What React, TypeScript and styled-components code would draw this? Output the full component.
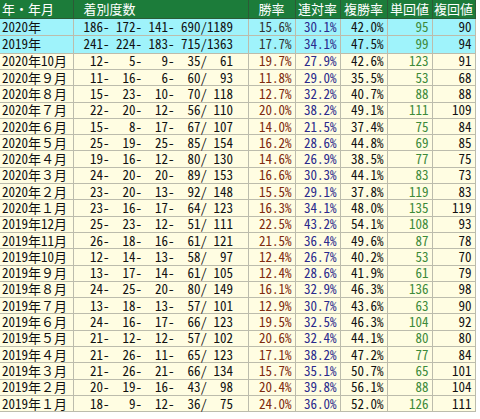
import React from "react";
import styled, { createGlobalStyle } from "styled-components";

const Global = createGlobalStyle`
  html, body { margin: 0; padding: 0; background: #ffffff; }
  body { width: 480px; height: 419px; overflow: hidden; }
`;

type Row = {
  label: string;
  counts: [number, number, number, number, number];
  win: string;
  ren: string;
  fuku: string;
  tan: number;
  fkv: number;
  summary?: boolean;
};

const rows: Row[] = [
  { label: "2020年", counts: [186, 172, 141, 690, 1189], win: "15.6%", ren: "30.1%", fuku: "42.0%", tan: 95, fkv: 90, summary: true },
  { label: "2019年", counts: [241, 224, 183, 715, 1363], win: "17.7%", ren: "34.1%", fuku: "47.5%", tan: 99, fkv: 94, summary: true },
  { label: "2020年10月", counts: [12, 5, 9, 35, 61], win: "19.7%", ren: "27.9%", fuku: "42.6%", tan: 123, fkv: 91 },
  { label: "2020年９月", counts: [11, 16, 6, 60, 93], win: "11.8%", ren: "29.0%", fuku: "35.5%", tan: 53, fkv: 68 },
  { label: "2020年８月", counts: [15, 23, 10, 70, 118], win: "12.7%", ren: "32.2%", fuku: "40.7%", tan: 88, fkv: 88 },
  { label: "2020年７月", counts: [22, 20, 12, 56, 110], win: "20.0%", ren: "38.2%", fuku: "49.1%", tan: 111, fkv: 109 },
  { label: "2020年６月", counts: [15, 8, 17, 67, 107], win: "14.0%", ren: "21.5%", fuku: "37.4%", tan: 75, fkv: 84 },
  { label: "2020年５月", counts: [25, 19, 25, 85, 154], win: "16.2%", ren: "28.6%", fuku: "44.8%", tan: 69, fkv: 85 },
  { label: "2020年４月", counts: [19, 16, 12, 80, 130], win: "14.6%", ren: "26.9%", fuku: "38.5%", tan: 77, fkv: 75 },
  { label: "2020年３月", counts: [24, 20, 20, 89, 153], win: "16.6%", ren: "30.3%", fuku: "44.1%", tan: 83, fkv: 73 },
  { label: "2020年２月", counts: [23, 20, 13, 92, 148], win: "15.5%", ren: "29.1%", fuku: "37.8%", tan: 119, fkv: 83 },
  { label: "2020年１月", counts: [23, 16, 17, 64, 123], win: "16.3%", ren: "34.1%", fuku: "48.0%", tan: 135, fkv: 119 },
  { label: "2019年12月", counts: [25, 23, 12, 51, 111], win: "22.5%", ren: "43.2%", fuku: "54.1%", tan: 108, fkv: 93 },
  { label: "2019年11月", counts: [26, 18, 16, 61, 121], win: "21.5%", ren: "36.4%", fuku: "49.6%", tan: 87, fkv: 78 },
  { label: "2019年10月", counts: [12, 14, 13, 58, 97], win: "12.4%", ren: "26.7%", fuku: "40.2%", tan: 53, fkv: 70 },
  { label: "2019年９月", counts: [13, 17, 14, 61, 105], win: "12.4%", ren: "28.6%", fuku: "41.9%", tan: 61, fkv: 79 },
  { label: "2019年８月", counts: [24, 25, 20, 80, 149], win: "16.1%", ren: "32.9%", fuku: "46.3%", tan: 136, fkv: 98 },
  { label: "2019年７月", counts: [13, 18, 13, 57, 101], win: "12.9%", ren: "30.7%", fuku: "43.6%", tan: 63, fkv: 90 },
  { label: "2019年６月", counts: [24, 16, 17, 66, 123], win: "19.5%", ren: "32.5%", fuku: "46.3%", tan: 104, fkv: 92 },
  { label: "2019年５月", counts: [21, 12, 12, 57, 102], win: "20.6%", ren: "32.4%", fuku: "44.1%", tan: 80, fkv: 80 },
  { label: "2019年４月", counts: [21, 26, 11, 65, 123], win: "17.1%", ren: "38.2%", fuku: "47.2%", tan: 77, fkv: 84 },
  { label: "2019年３月", counts: [21, 26, 21, 66, 134], win: "15.7%", ren: "35.1%", fuku: "50.7%", tan: 65, fkv: 101 },
  { label: "2019年２月", counts: [20, 19, 16, 43, 98], win: "20.4%", ren: "39.8%", fuku: "56.1%", tan: 88, fkv: 104 },
  { label: "2019年１月", counts: [18, 9, 12, 36, 75], win: "24.0%", ren: "36.0%", fuku: "52.0%", tan: 126, fkv: 111 },
];

const pad = (n: number, w: number) => String(n).padStart(w, " ");
const fmtCounts = (c: Row["counts"]) =>
  `${pad(c[0], 3)}- ${pad(c[1], 3)}- ${pad(c[2], 3)}- ${pad(c[3], 3)}/${pad(c[4], 4)}`;

const FONT = `"Noto Sans Mono CJK JP", "Noto Sans CJK JP", monospace`;

const Table = styled.table`
  border-collapse: collapse;
  table-layout: fixed;
  width: 475px;
  font-family: ${FONT};
  font-size: 13px;
  line-height: 14px;
`;

const HeadRow = styled.tr`
  height: 18px;
`;

const HeadCell = styled.th<{ $align?: "left" | "center"; $indent?: number }>`
  background: #1c7c3a;
  color: #ffffff;
  font-weight: normal;
  padding: 0 0 0 ${(p) => p.$indent ?? 0}px;
  text-align: ${(p) => p.$align ?? "center"};
  border: 1px solid #2d5a36;
  border-top: none;
  white-space: nowrap;
  &:first-child { border-left: none; }
`;

const BodyRow = styled.tr<{ $summary?: boolean }>`
  height: ${(p) => (p.$summary ? "17.6px" : "16.3px")};
  background: ${(p) => (p.$summary ? "#9ff3fb" : "#fffde2")};
`;

const Cell = styled.td<{ $color?: string }>`
  padding: 0 3px 0 0;
  border: 1px solid #bcbcac;
  text-align: right;
  color: ${(p) => p.$color ?? "#111111"};
  white-space: pre;
`;

const LabelCell = styled(Cell)`
  text-align: left;
  padding: 0 0 0 2px;
  border-left: none;
`;

const CountsCell = styled(Cell)`
  text-align: left;
  padding: 0 0 0 10px;
`;

export default function App() {
  return (
    <>
      <Global />
      <Table>
        <colgroup>
          <col style={{ width: 73 }} />
          <col style={{ width: 175 }} />
          <col style={{ width: 47 }} />
          <col style={{ width: 45 }} />
          <col style={{ width: 47 }} />
          <col style={{ width: 45 }} />
          <col style={{ width: 43 }} />
        </colgroup>
        <thead>
          <HeadRow>
            <HeadCell $align="left" $indent={2}>年・年月</HeadCell>
            <HeadCell $align="left" $indent={10}>着別度数</HeadCell>
            <HeadCell>勝率</HeadCell>
            <HeadCell>連対率</HeadCell>
            <HeadCell>複勝率</HeadCell>
            <HeadCell>単回値</HeadCell>
            <HeadCell>複回値</HeadCell>
          </HeadRow>
        </thead>
        <tbody>
          {rows.map((r) => (
            <BodyRow key={r.label} $summary={r.summary}>
              <LabelCell>{r.label}</LabelCell>
              <CountsCell>{fmtCounts(r.counts)}</CountsCell>
              <Cell $color={r.summary ? "#333333" : "#7e2a0e"}>{r.win}</Cell>
              <Cell $color="#2a2a8c">{r.ren}</Cell>
              <Cell>{r.fuku}</Cell>
              <Cell $color="#3d8a3a">{r.tan}</Cell>
              <Cell>{r.fkv}</Cell>
            </BodyRow>
          ))}
        </tbody>
      </Table>
    </>
  );
}
